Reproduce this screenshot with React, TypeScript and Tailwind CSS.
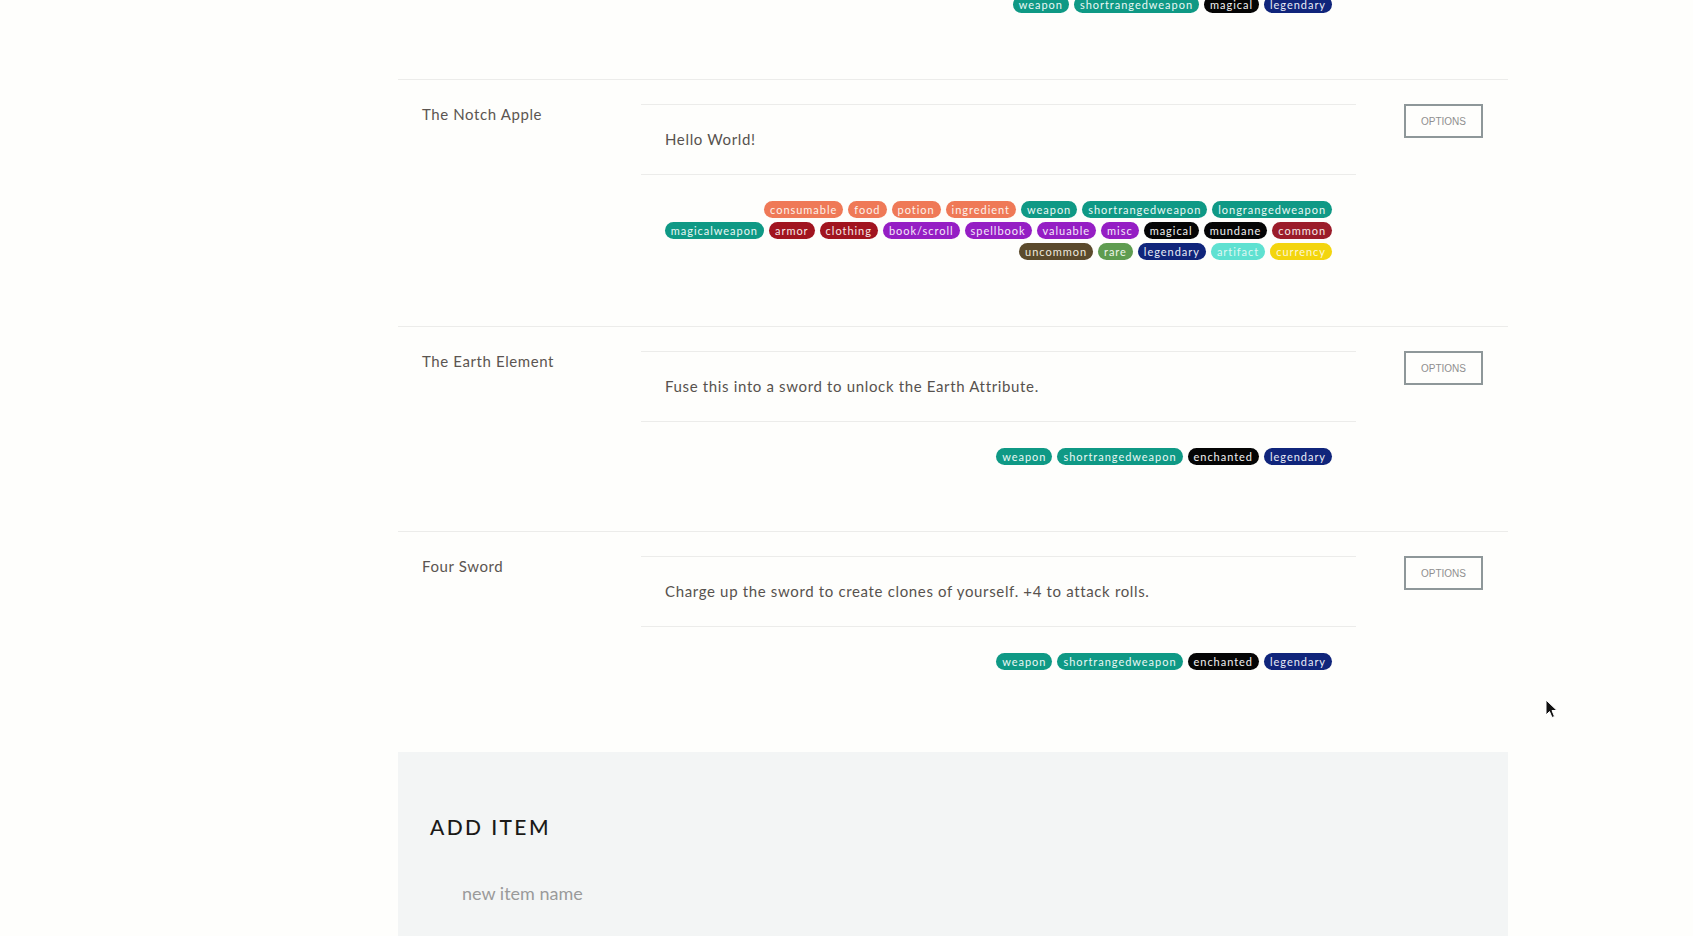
import React from "react";

type Item = {
  name: string;
  description: string;
  tags: string[][];
};

const TAG_COLORS: Record<string, string> = {
  consumable: "bg-[#ef7957] text-[#fdf1ec]",
  food: "bg-[#ef7957] text-[#fdf1ec]",
  potion: "bg-[#ef7957] text-[#fdf1ec]",
  ingredient: "bg-[#ef7957] text-[#fdf1ec]",
  weapon: "bg-[#0f9985] text-[#eaf8f5]",
  shortrangedweapon: "bg-[#0f9985] text-[#eaf8f5]",
  longrangedweapon: "bg-[#0f9985] text-[#eaf8f5]",
  magicalweapon: "bg-[#0f9985] text-[#eaf8f5]",
  armor: "bg-[#a1141f] text-[#f7e8e8]",
  clothing: "bg-[#a1141f] text-[#f7e8e8]",
  "book/scroll": "bg-[#951ec4] text-[#f5e9fa]",
  spellbook: "bg-[#951ec4] text-[#f5e9fa]",
  valuable: "bg-[#951ec4] text-[#f5e9fa]",
  misc: "bg-[#951ec4] text-[#f5e9fa]",
  magical: "bg-[#050505] text-[#f2f2f2]",
  mundane: "bg-[#050505] text-[#f2f2f2]",
  enchanted: "bg-[#050505] text-[#f2f2f2]",
  common: "bg-[#9b1c2a] text-[#f7e8e8]",
  uncommon: "bg-[#5b4a2c] text-[#efe9df]",
  rare: "bg-[#5f9c50] text-[#eef6ea]",
  legendary: "bg-[#10257b] text-[#e9ecf7]",
  artifact: "bg-[#5fe1d1] text-[#dff8f4]",
  currency: "bg-[#f3d50e] text-[#fdf7d6]",
};

const ITEMS: Item[] = [
  {
    name: "Master Sword",
    description: "The blade of evil's bane.",
    tags: [["weapon", "shortrangedweapon", "magical", "legendary"]],
  },
  {
    name: "The Notch Apple",
    description: "Hello World!",
    tags: [
      ["consumable", "food", "potion", "ingredient", "weapon", "shortrangedweapon", "longrangedweapon"],
      ["magicalweapon", "armor", "clothing", "book/scroll", "spellbook", "valuable", "misc", "magical", "mundane", "common"],
      ["uncommon", "rare", "legendary", "artifact", "currency"],
    ],
  },
  {
    name: "The Earth Element",
    description: "Fuse this into a sword to unlock the Earth Attribute.",
    tags: [["weapon", "shortrangedweapon", "enchanted", "legendary"]],
  },
  {
    name: "Four Sword",
    description: "Charge up the sword to create clones of yourself. +4 to attack rolls.",
    tags: [["weapon", "shortrangedweapon", "enchanted", "legendary"]],
  },
];

function Tag({ label }: { label: string }) {
  return (
    <span
      className={`h-[17px] px-[6px] rounded-full text-[11px] leading-[17px] tracking-[0.97px] whitespace-nowrap ${TAG_COLORS[label]}`}
    >
      {label}
    </span>
  );
}

function ItemRow({ item }: { item: Item }) {
  return (
    <div className="border-t border-[#ececea] flex pl-6 pr-[25px] pt-6 pb-[66px]">
      {/* Name */}
      <div className="w-[219px] shrink-0 text-[15px] leading-5 tracking-[0.6px] text-[#5b5551]">
        {item.name}
      </div>

      {/* Description + tags */}
      <div className="w-[715px] shrink-0">
        <div className="border-y border-[#ececea] px-6 pt-6 pb-[25px] text-[15px] leading-5 tracking-[0.65px] text-[#57524e]">
          {item.description}
        </div>
        <div className="px-6 pt-[26px] flex flex-col gap-[4px]">
          {item.tags.map((row, i) => (
            <div key={i} className="flex justify-end gap-[5px]">
              {row.map((tag) => (
                <Tag key={tag} label={tag} />
              ))}
            </div>
          ))}
        </div>
      </div>

      {/* Options */}
      <div className="ml-12 shrink-0">
        <button className="w-[79px] h-[34px] border-2 border-[#8e9799] bg-transparent text-[10px] text-[#8f8f8f] font-['Liberation_Sans',Arial,sans-serif]">
          OPTIONS
        </button>
      </div>
    </div>
  );
}

export default function App() {
  return (
    <div className="relative min-h-[936px] overflow-hidden bg-[#fefefc] font-['Lato',sans-serif]">
      {/* list is scrolled: the first item only shows its tags */}
      <div className="ml-[398px] w-[1110px] -mt-[126px]">
        {ITEMS.map((item) => (
          <ItemRow key={item.name} item={item} />
        ))}
      </div>

      {/* Add item panel */}
      <div className="ml-[398px] w-[1110px] mt-[16px] bg-[#f3f5f5] px-8 pt-[60px] pb-[80px]">
        <h2 className="text-[21px] leading-[30px] tracking-[2.4px] font-medium text-[#1b1917]">ADD ITEM</h2>
        <input
          placeholder="new item name"
          className="mt-[29px] h-[44px] w-[400px] bg-transparent pl-8 text-[18px] text-[#555] placeholder:text-[#9a9a9a] outline-none"
        />
      </div>

      {/* mouse cursor */}
      <svg className="absolute left-[1545px] top-[699px]" width="14" height="20" viewBox="0 0 14 20">
        <path d="M1 1 L1 16 L4.5 12.5 L7 18.5 L9.5 17.5 L7 11.5 L12 11.5 Z" fill="#111" stroke="#fff" strokeWidth="1" />
      </svg>
    </div>
  );
}
